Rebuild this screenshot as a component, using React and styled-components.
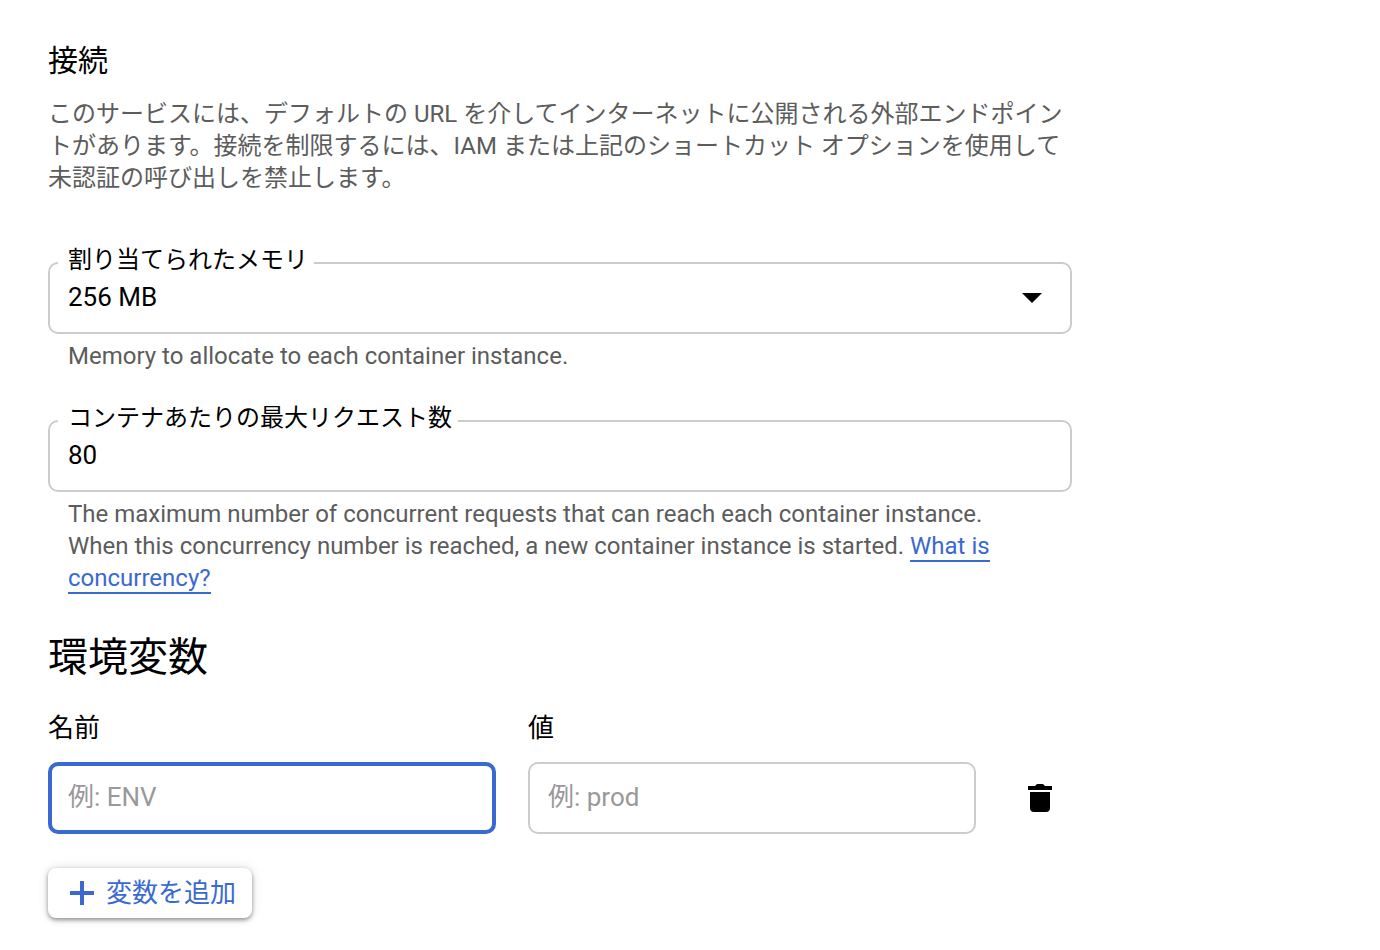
import React, { useState } from 'react';
import styled, { createGlobalStyle } from 'styled-components';

const GlobalStyle = createGlobalStyle`
    * {
        box-sizing: border-box;
    }

    body {
        margin: 0;
        background: #fff;
        color: #000;
        font-family: Roboto, "Noto Sans CJK JP", sans-serif;
        font-size: 24px;
        line-height: 32px;
    }
`;

const Page = styled.main`
    max-width: 1120px;
    padding: 42px 48px 32px;
`;

const SubTitle = styled.h3`
    margin: 0 0 18px;
    font-size: 30px;
    font-weight: 400;
    line-height: 38px;
`;

const Title = styled.h2`
    margin: 40px 0 30px;
    font-size: 40px;
    font-weight: 400;
    line-height: 48px;
`;

const Description = styled.p`
    margin: 0 0 68px;
    color: #5c5c5c;
`;

const Field = styled.div`
    position: relative;

    & + & {
        margin-top: 48px;
    }
`;

const FloatingLabel = styled.label`
    position: absolute;
    top: -18px;
    left: 10px;
    padding: 0 6px 0 10px;
    background: #fff;
`;

const TextInput = styled.input`
    display: block;
    width: 100%;
    height: 72px;
    padding: ${props => (props.$active ? '0 16px 2px' : '0 18px 2px')};
    border: ${props => (props.$active ? '4px solid #3a69d2' : '2px solid #ccc')};
    border-radius: 10px;
    outline: none;
    background: #fff;
    color: #000;
    font-family: inherit;
    font-size: 26px;

    &::placeholder {
        color: #999;
        opacity: 1;
    }
`;

const Select = styled(TextInput)`
    appearance: none;
    cursor: pointer;
`;

const Arrow = styled.svg`
    position: absolute;
    top: 31px;
    right: 30px;
    pointer-events: none;
`;

const Hint = styled.p`
    margin: 6px 0 0;
    padding: 0 40px 0 20px;
    color: #5c5c5c;
`;

const Link = styled.a`
    border-bottom: 2px solid #3a69d2;
    color: #3a69d2;
    text-decoration: none;
`;

const VariableRow = styled.div`
    display: grid;
    grid-template-columns: 1fr 1fr 64px;
    gap: 32px;
    align-items: end;
    margin-bottom: 34px;
`;

const ColumnLabel = styled.label`
    display: block;
    margin-bottom: 18px;
    font-size: 26px;
`;

const IconButton = styled.button`
    display: flex;
    align-items: center;
    justify-content: center;
    height: 72px;
    padding: 0;
    border: none;
    background: none;
    cursor: pointer;
`;

const AddButton = styled.button`
    display: inline-flex;
    align-items: center;
    gap: 12px;
    height: 50px;
    padding: 0 16px 0 22px;
    border: none;
    border-radius: 8px;
    background: #fff;
    box-shadow: 0 2px 4px rgba(0, 0, 0, 0.4), 0 0 12px rgba(0, 0, 0, 0.12);
    color: #3a69d2;
    font-family: inherit;
    font-size: 26px;
    line-height: 32px;
    cursor: pointer;
`;

const TrashIcon = () => (
    <svg width="24" height="28" viewBox="0 0 24 28" aria-hidden="true">
        <path d="M0 2h7l2-2h6l2 2h7v4H0z" />
        <path d="M2 8h20v16a4 4 0 0 1-4 4H6a4 4 0 0 1-4-4z" />
    </svg>
);

const PlusIcon = () => (
    <svg width="24" height="24" viewBox="0 0 24 24" fill="currentColor" aria-hidden="true">
        <path d="M10 0h4v10h10v4H14v10h-4V14H0v-4h10z" />
    </svg>
);

const App = () => {
    const [memory, setMemory] = useState('256 MB');
    const [concurrency, setConcurrency] = useState('80');

    return (
        <>
            <GlobalStyle />
            <Page lang="ja">
                <SubTitle>接続</SubTitle>
                <Description>
                    このサービスには、デフォルトの URL を介してインターネットに公開される外部エンドポイントがあります。接続を制限するには、IAM または上記のショートカット オプションを使用して未認証の呼び出しを禁止します。
                </Description>

                <Field>
                    <Select as="select" id="memory" value={memory} onChange={e => setMemory(e.target.value)}>
                        <option>256 MB</option>
                    </Select>
                    <FloatingLabel htmlFor="memory">割り当てられたメモリ</FloatingLabel>
                    <Arrow width="20" height="10" viewBox="0 0 20 10" aria-hidden="true">
                        <path d="M0 0h20L10 10z" />
                    </Arrow>
                    <Hint>Memory to allocate to each container instance.</Hint>
                </Field>

                <Field>
                    <TextInput id="concurrency" value={concurrency} onChange={e => setConcurrency(e.target.value)} />
                    <FloatingLabel htmlFor="concurrency">コンテナあたりの最大リクエスト数</FloatingLabel>
                    <Hint>
                        The maximum number of concurrent requests that can reach each container instance.
                        When this concurrency number is reached, a new container instance is started.{' '}
                        <Link href="#concurrency">What is concurrency?</Link>
                    </Hint>
                </Field>

                <Title>環境変数</Title>
                <VariableRow>
                    <div>
                        <ColumnLabel htmlFor="name">名前</ColumnLabel>
                        <TextInput id="name" placeholder="例: ENV" $active />
                    </div>
                    <div>
                        <ColumnLabel htmlFor="value">値</ColumnLabel>
                        <TextInput id="value" placeholder="例: prod" />
                    </div>
                    <IconButton type="button" aria-label="削除">
                        <TrashIcon />
                    </IconButton>
                </VariableRow>
                <AddButton type="button">
                    <PlusIcon />
                    変数を追加
                </AddButton>
            </Page>
        </>
    );
};

export default App;
